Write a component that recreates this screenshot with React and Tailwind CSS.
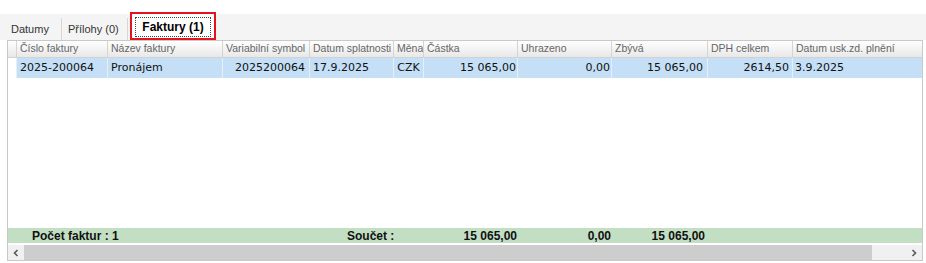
import React from "react";

const cols = [
    { key: "ind", w: "w-[9px]" },
    { key: "cislo", w: "w-[91px]", title: "Číslo faktury" },
    { key: "nazev", w: "w-[115px]", title: "Název faktury" },
    { key: "vs", w: "w-[87px]", title: "Variabilní symbol" },
    { key: "splat", w: "w-[84px]", title: "Datum splatnosti" },
    { key: "mena", w: "w-[30px]", title: "Měna" },
    { key: "castka", w: "w-[94px]", title: "Částka" },
    { key: "uhr", w: "w-[94px]", title: "Uhrazeno" },
    { key: "zbyva", w: "w-[96px]", title: "Zbývá" },
    { key: "dph", w: "w-[85px]", title: "DPH celkem" },
    { key: "duzp", w: "w-[129px]", title: "Datum usk.zd. plnění" },
];

const row = [
    { text: "", cls: "bg-white" },
    { text: "2025-200064", cls: "pl-[3px]" },
    { text: "Pronájem", cls: "pl-[3px]" },
    { text: "2025200064", cls: "justify-end pr-[4px]" },
    { text: "17.9.2025", cls: "pl-[3px]" },
    { text: "CZK", cls: "justify-center" },
    { text: "15 065,00", cls: "justify-end pr-[1px]" },
    { text: "0,00", cls: "justify-end pr-[1px]" },
    { text: "15 065,00", cls: "justify-end pr-[4px]" },
    { text: "2614,50", cls: "justify-end pr-[3px]" },
    { text: "3.9.2025", cls: "pl-[2px]" },
];

const App = () => {
    return (
        <div className="w-[926px] h-[263px] bg-white overflow-hidden font-['Liberation_Sans',Arial,sans-serif]">
            <div className="h-[14px]" />

            {/* tabs */}
            <div className="h-[26px] bg-[#f4f4f4] flex items-end pl-[8px] text-[11px] text-[#333]">
                <div className="w-[54px] h-[22px] flex items-center pl-[3px] border-r border-[#d6d6d6]">
                    Datumy
                </div>
                <div className="w-[66px] h-[22px] flex items-center pl-[6px] border-r border-[#d6d6d6]">
                    Přílohy (0)
                </div>
                <div className="ml-[2px] w-[86px] h-[28px] border-2 border-[#e3131b] bg-white p-[3px] pb-[1px]">
                    <div className="h-full border border-dotted border-[#444] flex items-center justify-center font-bold text-[12px] text-black">
                        Faktury (1)
                    </div>
                </div>
            </div>

            {/* grid */}
            <div className="ml-[7px] w-[916px] h-[221px] border border-[#c9c9c9] flex flex-col">
                <div className="h-[17px] flex border-b border-[#d2d2d2] bg-linear-to-b from-white to-[#e8e8e8] text-[10.5px] text-[#666]">
                    {cols.map((c) => (
                        <div
                            key={c.key}
                            className={`${c.w} shrink-0 flex items-center pl-[3px] whitespace-nowrap overflow-hidden border-r border-[#d4d4d4] last:border-r-0`}
                        >
                            {c.title}
                        </div>
                    ))}
                </div>

                <div className="h-[20px] flex text-[11px] text-[#111] font-['DejaVu_Sans',Verdana,sans-serif]">
                    {row.map((r, i) => (
                        <div
                            key={i}
                            className={`${cols[i].w} shrink-0 flex items-center whitespace-nowrap overflow-hidden bg-[#c4dff6] border-r border-[#e4effa] last:border-r-0 ${r.cls}`}
                        >
                            {r.text}
                        </div>
                    ))}
                </div>

                <div className="flex-1 bg-white" />

                {/* footer */}
                <div className="h-[15px] flex bg-[#c2dfc4] text-[12px] font-bold text-[#111] whitespace-nowrap">
                    <div className="w-[302px] shrink-0 flex items-center pl-[24px]">Počet faktur : 1</div>
                    <div className="w-[114px] shrink-0 flex items-center pl-[37px]">Součet :</div>
                    <div className="w-[94px] shrink-0 flex items-center justify-end pr-[1px]">15 065,00</div>
                    <div className="w-[94px] shrink-0 flex items-center justify-end pr-[1px]">0,00</div>
                    <div className="w-[96px] shrink-0 flex items-center justify-end pr-[3px]">15 065,00</div>
                    <div className="flex-1" />
                </div>

                <div className="h-[2px] bg-white" />

                {/* scrollbar */}
                <div className="h-[15px] flex bg-[#f0f0f0]">
                    <div className="w-[16px] shrink-0 flex items-center justify-center">
                        <svg width="6" height="8" viewBox="0 0 6 8">
                            <path d="M4.5 1 L1.5 4 L4.5 7" fill="none" stroke="#5a5a5a" strokeWidth="1.6" />
                        </svg>
                    </div>
                    <div className="w-[848px] shrink-0 bg-[#cdcdcd]" />
                    <div className="flex-1" />
                    <div className="w-[16px] shrink-0 flex items-center justify-center">
                        <svg width="6" height="8" viewBox="0 0 6 8">
                            <path d="M1.5 1 L4.5 4 L1.5 7" fill="none" stroke="#5a5a5a" strokeWidth="1.6" />
                        </svg>
                    </div>
                </div>
            </div>
        </div>
    );
};

export default App;
